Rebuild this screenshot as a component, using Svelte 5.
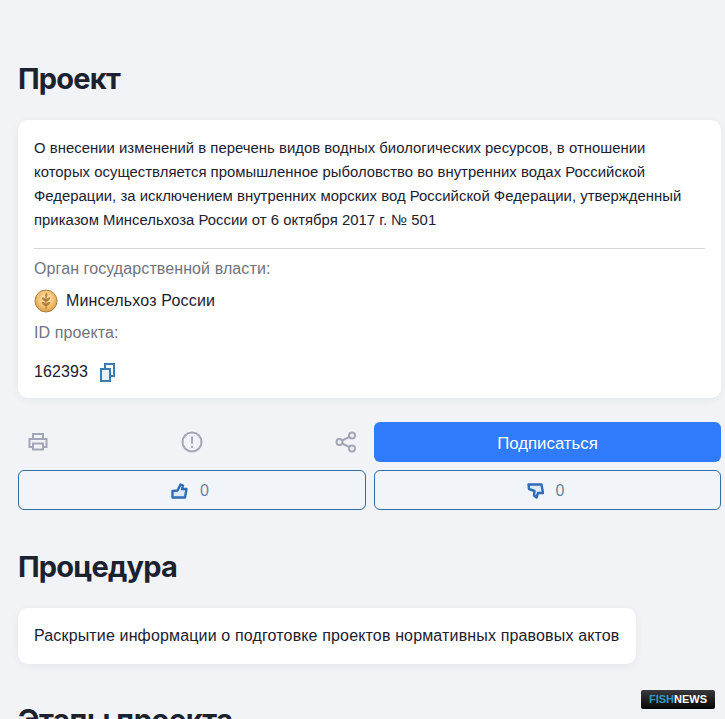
<script>
  const title = 'О внесении изменений в перечень видов водных биологических ресурсов, в отношении которых осуществляется промышленное рыболовство во внутренних водах Российской Федерации, за исключением внутренних морских вод Российской Федерации, утвержденный приказом Минсельхоза России от 6 октября 2017 г. № 501';
</script>

<main>
  <h2 class="first">Проект</h2>

  <section class="card project">
    <p class="title">{title}</p>
    <hr />
    <p class="label">Орган государственной власти:</p>
    <div class="org">
      <svg width="24" height="24" viewBox="0 0 24 24">
        <defs>
          <radialGradient id="medal" cx="0.5" cy="0.42" r="0.6">
            <stop offset="0" stop-color="#fdeec8" />
            <stop offset="0.65" stop-color="#f2bd69" />
            <stop offset="1" stop-color="#d8923a" />
          </radialGradient>
        </defs>
        <circle cx="12" cy="12" r="11" fill="url(#medal)" stroke="#a5854f" stroke-width="1" />
        <path d="M12.500 3.500c1.500 1.800 1.300 3.700-.5 5.500-1.300-1.800-1.200-3.800.5-5.500zM12 10.500c1.400-2 2.800-2.400 4.200-1.800-.2 2.200-1.700 3.500-4.200 3.800zM12 10.500c-1.400-2-2.800-2.400-4.200-1.800.2 2.200 1.700 3.500 4.200 3.800zM12 15c1.400-2 2.800-2.400 4.200-1.800-.2 2.200-1.700 3.500-4.200 3.800zM12 15c-1.400-2-2.800-2.400-4.200-1.800.2 2.200 1.700 3.500 4.200 3.800z" fill="#b9813a" />
        <path d="M12 8v12" stroke="#96702f" stroke-width="1" />
      </svg>
      <span>Минсельхоз России</span>
    </div>
    <p class="label id-label">ID проекта:</p>
    <div class="id">
      <span>162393</span>
      <svg width="16" height="20" viewBox="0 0 16 20" fill="none" stroke="#3b7cb0" stroke-width="2">
        <rect x="2" y="7" width="9" height="12" fill="#eaf2f8" />
        <path d="M6 6V2h9v12h-3.500" />
      </svg>
    </div>
  </section>

  <div class="actions">
    <div class="icons">
      <svg width="22" height="22" viewBox="0 0 22 22" fill="none" stroke="#a3a6b8" stroke-width="2">
        <path d="M6 7V3h10v4" />
        <path d="M6 16H2.500V8h17v8H16" />
        <rect x="6" y="12.500" width="10" height="6" />
      </svg>
      <svg width="22" height="22" viewBox="0 0 22 22" fill="none" stroke="#a3a6b8" stroke-width="2">
        <circle cx="11" cy="11" r="9.500" />
        <path d="M11 5.500v7M11 15v2" />
      </svg>
      <svg width="22" height="22" viewBox="0 0 22 22" fill="none" stroke="#a3a6b8" stroke-width="2">
        <circle cx="4.500" cy="11" r="3" />
        <circle cx="17" cy="4.500" r="3" />
        <circle cx="17" cy="17.500" r="3" />
        <path d="M7 9.500l7.500-3.700M7 12.500l7.500 3.700" />
      </svg>
    </div>
    <button class="subscribe">Подписаться</button>
    <button class="vote">
      <svg width="17" height="16" viewBox="0 0 17 16" fill="#dfeaf6" stroke="#2f6cb5" stroke-width="2.400" stroke-linejoin="round">
        <path d="M1.500 14.500V8l5-.5L9.500 1.500 12 2.500l-1 3.500h4.500L14 14.500z" />
      </svg>
      <span>0</span>
    </button>
    <button class="vote">
      <svg width="17" height="16" viewBox="0 0 17 16" fill="#dfeaf6" stroke="#2f6cb5" stroke-width="2.400" stroke-linejoin="round">
        <path d="M1.500 1.500h13l1.500 8.500h-5L9.500 14.500 7 12.500l.5-4.500L2 6z" />
      </svg>
      <span>0</span>
    </button>
  </div>

  <h2 class="second">Процедура</h2>
  <section class="card procedure">Раскрытие информации о подготовке проектов нормативных правовых актов</section>

  <h2 class="third">Этапы проекта</h2>
</main>

<div class="badge"><span class="fish">FISH</span><span>NEWS</span></div>

<style>
  :global(body) {
    margin: 0;
    background: #f1f3f6;
    overflow: hidden;
  }

  main {
    box-sizing: border-box;
    width: 725px;
    height: 719px;
    overflow: hidden;
    padding: 60px 4px 0 18px;
    font-family: "Liberation Sans", Arial, sans-serif;
    color: #1c2130;
  }

  h2 {
    margin: 0;
    font-family: Inter, "Liberation Sans", sans-serif;
    font-size: 29px;
    line-height: 38px;
    font-weight: 700;
    letter-spacing: -0.8px;
  }

  .card {
    background: #fff;
    border-radius: 10px;
    box-shadow: 0 2px 8px rgba(40, 50, 80, 0.06);
  }

  .project {
    margin-top: 22px;
    padding: 16px 16px 15px;
  }

  .title {
    max-width: 660px;
    margin: 0;
    font-size: 14.880px;
    line-height: 24px;
    letter-spacing: 0.02px;
  }

  hr {
    margin: 16px 0 0;
    border: 0;
    border-top: 1px solid #d5d6da;
  }

  .label {
    margin: 0;
    font-size: 16px;
    line-height: 20px;
    letter-spacing: 0.1px;
    color: #6f7480;
  }

  hr + .label {
    margin-top: 10px;
  }

  .org {
    display: flex;
    align-items: center;
    gap: 8px;
    margin-top: 10px;
    font-size: 16px;
    line-height: 24px;
    letter-spacing: 0.17px;
  }

  .id-label {
    margin-top: 10px;
  }

  .id {
    display: flex;
    align-items: center;
    gap: 11px;
    margin-top: 18px;
    font-size: 16px;
    line-height: 22px;
    letter-spacing: 0.1px;
  }

  .actions {
    display: grid;
    grid-template-columns: 348px 347px;
    gap: 8px;
    margin-top: 24px;
  }

  .icons {
    display: flex;
    align-items: center;
    justify-content: space-between;
    padding: 0 9px;
  }

  button {
    font-family: "Liberation Sans", Arial, sans-serif;
    font-size: 16px;
    border-radius: 6px;
  }

  .subscribe {
    height: 40px;
    padding-top: 4px;
    border: 0;
    background: #2f7bfb;
    color: #fff;
    font-size: 16.800px;
  }

  .vote {
    display: flex;
    align-items: center;
    justify-content: center;
    gap: 12px;
    height: 40px;
    padding: 2px 10px 0 6px;
    border: 1px solid #2f6da6;
    background: #f1f5f9;
    color: #6a84a0;
  }

  .second {
    margin-top: 38px;
  }

  .procedure {
    width: fit-content;
    margin-top: 22px;
    padding: 16px;
    font-size: 16px;
    line-height: 24px;
    letter-spacing: 0.15px;
  }

  .third {
    margin-top: 37px;
    letter-spacing: -0.4px;
  }

  .badge {
    position: fixed;
    left: 641px;
    top: 690px;
    width: 74px;
    height: 19px;
    box-sizing: border-box;
    border-radius: 2px;
    background: linear-gradient(#3a3a3c, #050505);
    color: #fff;
    font: 700 11px/19px "Liberation Sans", Arial, sans-serif;
    text-align: center;
  }

  .fish {
    color: #2a9bc6;
  }
</style>
